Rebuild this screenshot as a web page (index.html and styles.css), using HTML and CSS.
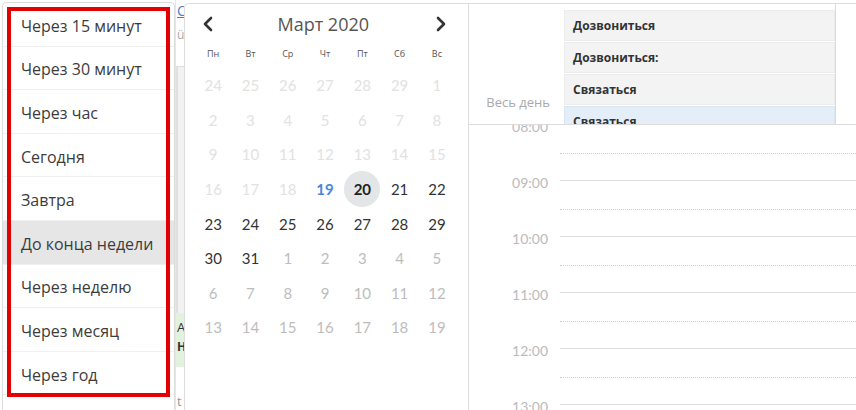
FILE: index.html
```html
<!DOCTYPE html>
<html lang="ru">
<head>
<meta charset="utf-8">
<link rel="stylesheet" href="styles.css">
</head>
<body>
<div class="page">
  <div class="menu-col">
    <div class="menu">
      <div class="item">Через 15 минут</div>
      <div class="item">Через 30 минут</div>
      <div class="item">Через час</div>
      <div class="item">Сегодня</div>
      <div class="item">Завтра</div>
      <div class="item active">До конца недели</div>
      <div class="item">Через неделю</div>
      <div class="item">Через месяц</div>
      <div class="item">Через год</div>
      <div class="red-frame"></div>
    </div>
  </div>
  <div class="strip">
    <div class="strip-top"><span class="strip-link">С</span><span class="strip-icon">ü</span></div>
    <div class="strip-grey"></div>
    <div class="strip-green"><span>А</span><b>Н</b></div>
    <div class="strip-white">t</div>
  </div>
  <div class="calendar">
    <div class="cal-head">
      <span class="arrow"><svg width="12" height="16" viewBox="0 0 12 16"><path d="M9 2 L3 8 L9 14" fill="none" stroke="#333" stroke-width="2.6" stroke-linecap="round" stroke-linejoin="round"/></svg></span>
      <span class="cal-title">Март 2020</span>
      <span class="arrow"><svg width="12" height="16" viewBox="0 0 12 16"><path d="M3 2 L9 8 L3 14" fill="none" stroke="#333" stroke-width="2.6" stroke-linecap="round" stroke-linejoin="round"/></svg></span>
    </div>
    <div class="weekdays">
      <span>Пн</span><span>Вт</span><span>Ср</span><span>Чт</span><span>Пт</span><span>Сб</span><span>Вс</span>
    </div>
    <div class="days">
      <span class="d past">24</span><span class="d past">25</span><span class="d past">26</span><span class="d past">27</span><span class="d past">28</span><span class="d past">29</span><span class="d past">1</span>
      <span class="d past">2</span><span class="d past">3</span><span class="d past">4</span><span class="d past">5</span><span class="d past">6</span><span class="d past">7</span><span class="d past">8</span>
      <span class="d past">9</span><span class="d past">10</span><span class="d past">11</span><span class="d past">12</span><span class="d past">13</span><span class="d past">14</span><span class="d past">15</span>
      <span class="d past">16</span><span class="d past">17</span><span class="d past">18</span><span class="d today">19</span><span class="d selected"><i>20</i></span><span class="d">21</span><span class="d">22</span>
      <span class="d">23</span><span class="d">24</span><span class="d">25</span><span class="d">26</span><span class="d">27</span><span class="d">28</span><span class="d">29</span>
      <span class="d">30</span><span class="d">31</span><span class="d next">1</span><span class="d next">2</span><span class="d next">3</span><span class="d next">4</span><span class="d next">5</span>
      <span class="d next">6</span><span class="d next">7</span><span class="d next">8</span><span class="d next">9</span><span class="d next">10</span><span class="d next">11</span><span class="d next">12</span>
      <span class="d next">13</span><span class="d next">14</span><span class="d next">15</span><span class="d next">16</span><span class="d next">17</span><span class="d next">18</span><span class="d next">19</span>
    </div>
  </div>
  <div class="dayview">
    <div class="allday">
      <div class="allday-label">Весь день</div>
      <div class="events">
        <div class="event">Дозвониться</div>
        <div class="event">Дозвониться:</div>
        <div class="event">Связаться</div>
        <div class="event hl">Связаться</div>
      </div>
    </div>
    <div class="grid">
      <div class="grid-inner">
        <div class="hour"><div class="hl-label">08:00</div><div class="slot"><div class="half"></div></div></div>
        <div class="hour"><div class="hl-label">09:00</div><div class="slot"><div class="half"></div></div></div>
        <div class="hour"><div class="hl-label">10:00</div><div class="slot"><div class="half"></div></div></div>
        <div class="hour"><div class="hl-label">11:00</div><div class="slot"><div class="half"></div></div></div>
        <div class="hour"><div class="hl-label">12:00</div><div class="slot"><div class="half"></div></div></div>
        <div class="hour"><div class="hl-label">13:00</div><div class="slot"><div class="half"></div></div></div>
      </div>
    </div>
  </div>
</div>
</body>
</html>
```

FILE: styles.css
```css
* { box-sizing: border-box; }
html, body { margin: 0; padding: 0; }
body {
  width: 856px;
  height: 410px;
  overflow: hidden;
  background: #fff;
  font-family: "Open Sans", "Noto Sans", sans-serif;
  color: #333;
}
.page {
  display: flex;
  height: 410px;
}

/* left quick menu */
.menu-col {
  width: 175px;
  padding: 2px 0 0 2px;
  flex: none;
}
.menu {
  position: relative;
  height: 420px;
  border: 1px solid #dcdcdc;
  border-radius: 4px;
  background: #fff;
}
.item {
  height: 43.6px;
  display: flex;
  align-items: center;
  padding: 3px 0 0 18px;
  font-size: 16px;
  color: #3c3c3c;
  border-bottom: 1px solid #f0f0f0;
}
.item.active { background: #e6e6e6; }
.red-frame {
  position: absolute;
  left: 4px;
  top: 4px;
  width: 163px;
  height: 390px;
  border: 4px solid #e30000;
}

/* background strip between popups */
.strip {
  width: 9px;
  flex: none;
  display: flex;
  flex-direction: column;
  overflow: hidden;
  border-left: 1px solid #e6e6e6;
}
.strip-top {
  height: 68px;
  display: flex;
  flex-direction: column;
  padding-left: 1px;
  font-size: 14px;
  line-height: 18px;
  border-bottom: 1px solid #dedede;
}
.strip-link { color: #4a7fc1; margin-top: 2px; text-decoration: underline; }
.strip-icon { color: #aaa; font-size: 12px; margin-top: 6px; }
.strip-grey {
  height: 248px;
  background: #f2f2f2;
  border-left: 2px solid #e0e0e0;
}
.strip-green {
  height: 54px;
  background: #e3f1df;
  display: flex;
  flex-direction: column;
  font-size: 13px;
  line-height: 16px;
  padding: 6px 0 0 1px;
  color: #333;
}
.strip-green b { font-size: 12px; margin-top: 4px; }
.strip-white {
  flex: 1;
  font-size: 13px;
  color: #999;
  padding: 25px 0 0 1px;
}

/* calendar */
.calendar {
  width: 284px;
  flex: none;
  margin-top: 3px;
  border-left: 1px solid #dcdcdc;
  border-top: 1px solid #dcdcdc;
  border-top-left-radius: 5px;
  padding: 0 13px 0 9.5px;
}
.cal-head {
  height: 39px;
  display: flex;
  align-items: center;
  justify-content: space-between;
  padding: 0 8px 0 7px;
}
.arrow { display: flex; }
.cal-title {
  font-size: 18px;
  color: #555;
  padding-right: 2px;
}
.weekdays {
  height: 22px;
  display: grid;
  grid-template-columns: repeat(7, 37.3px);
  align-items: center;
  justify-items: center;
  font-size: 9px;
  color: #555;
  padding-bottom: 2px;
}
.days {
  margin-top: 3px;
  display: grid;
  grid-template-columns: repeat(7, 37.3px);
  grid-auto-rows: 34.6px;
  font-family: Lato, "Open Sans", sans-serif;
  font-size: 15px;
}
.d {
  display: flex;
  align-items: center;
  justify-content: center;
  color: #333;
}
.d.past { color: #e2e2e2; }
.d.next { color: #bdbdbd; }
.d.today { color: #4a88d6; font-weight: bold; }
.d.selected i {
  font-style: normal;
  font-weight: bold;
  color: #222;
  width: 36px;
  height: 36px;
  border-radius: 50%;
  background: #e3e6e6;
  display: flex;
  align-items: center;
  justify-content: center;
}

/* day view */
.dayview {
  flex: 1;
  margin-top: 3px;
  border-left: 1px solid #dcdcdc;
  border-top: 1px solid #dcdcdc;
  display: flex;
  flex-direction: column;
  min-width: 0;
}
.allday {
  height: 121px;
  flex: none;
  display: flex;
  border-bottom: 1px solid #dcdcdc;
}
.allday-label {
  width: 81px;
  flex: none;
  text-align: right;
  font-size: 13px;
  color: #aaa;
  padding-top: 89px;
}
.events {
  width: 272px;
  margin-left: 14px;
  padding-top: 6px;
  overflow: hidden;
  border-right: 1px solid #dcdcdc;
}
.event {
  height: 31px;
  margin-bottom: 1px;
  background: #f3f3f3;
  border: 1px solid #ececec;
  display: flex;
  align-items: center;
  padding-left: 8px;
  font-size: 12px;
  font-weight: bold;
  color: #333;
}
.event.hl {
  background: #e4eef9;
  border-color: #dbe6f3;
}
.grid {
  flex: 1;
  overflow: hidden;
}
.grid-inner { margin-top: -1px; }
.hour {
  height: 56px;
  display: flex;
}
.hl-label {
  width: 79px;
  flex: none;
  text-align: right;
  font-family: Lato, "Open Sans", sans-serif;
  font-size: 14px;
  line-height: 16px;
  color: #bbb;
  margin-top: -5px;
}
.slot {
  flex: 1;
  margin-left: 12px;
  border-top: 1px solid #dedede;
}
.half {
  height: 29px;
  border-bottom: 1px dotted #cfcfcf;
}
```
